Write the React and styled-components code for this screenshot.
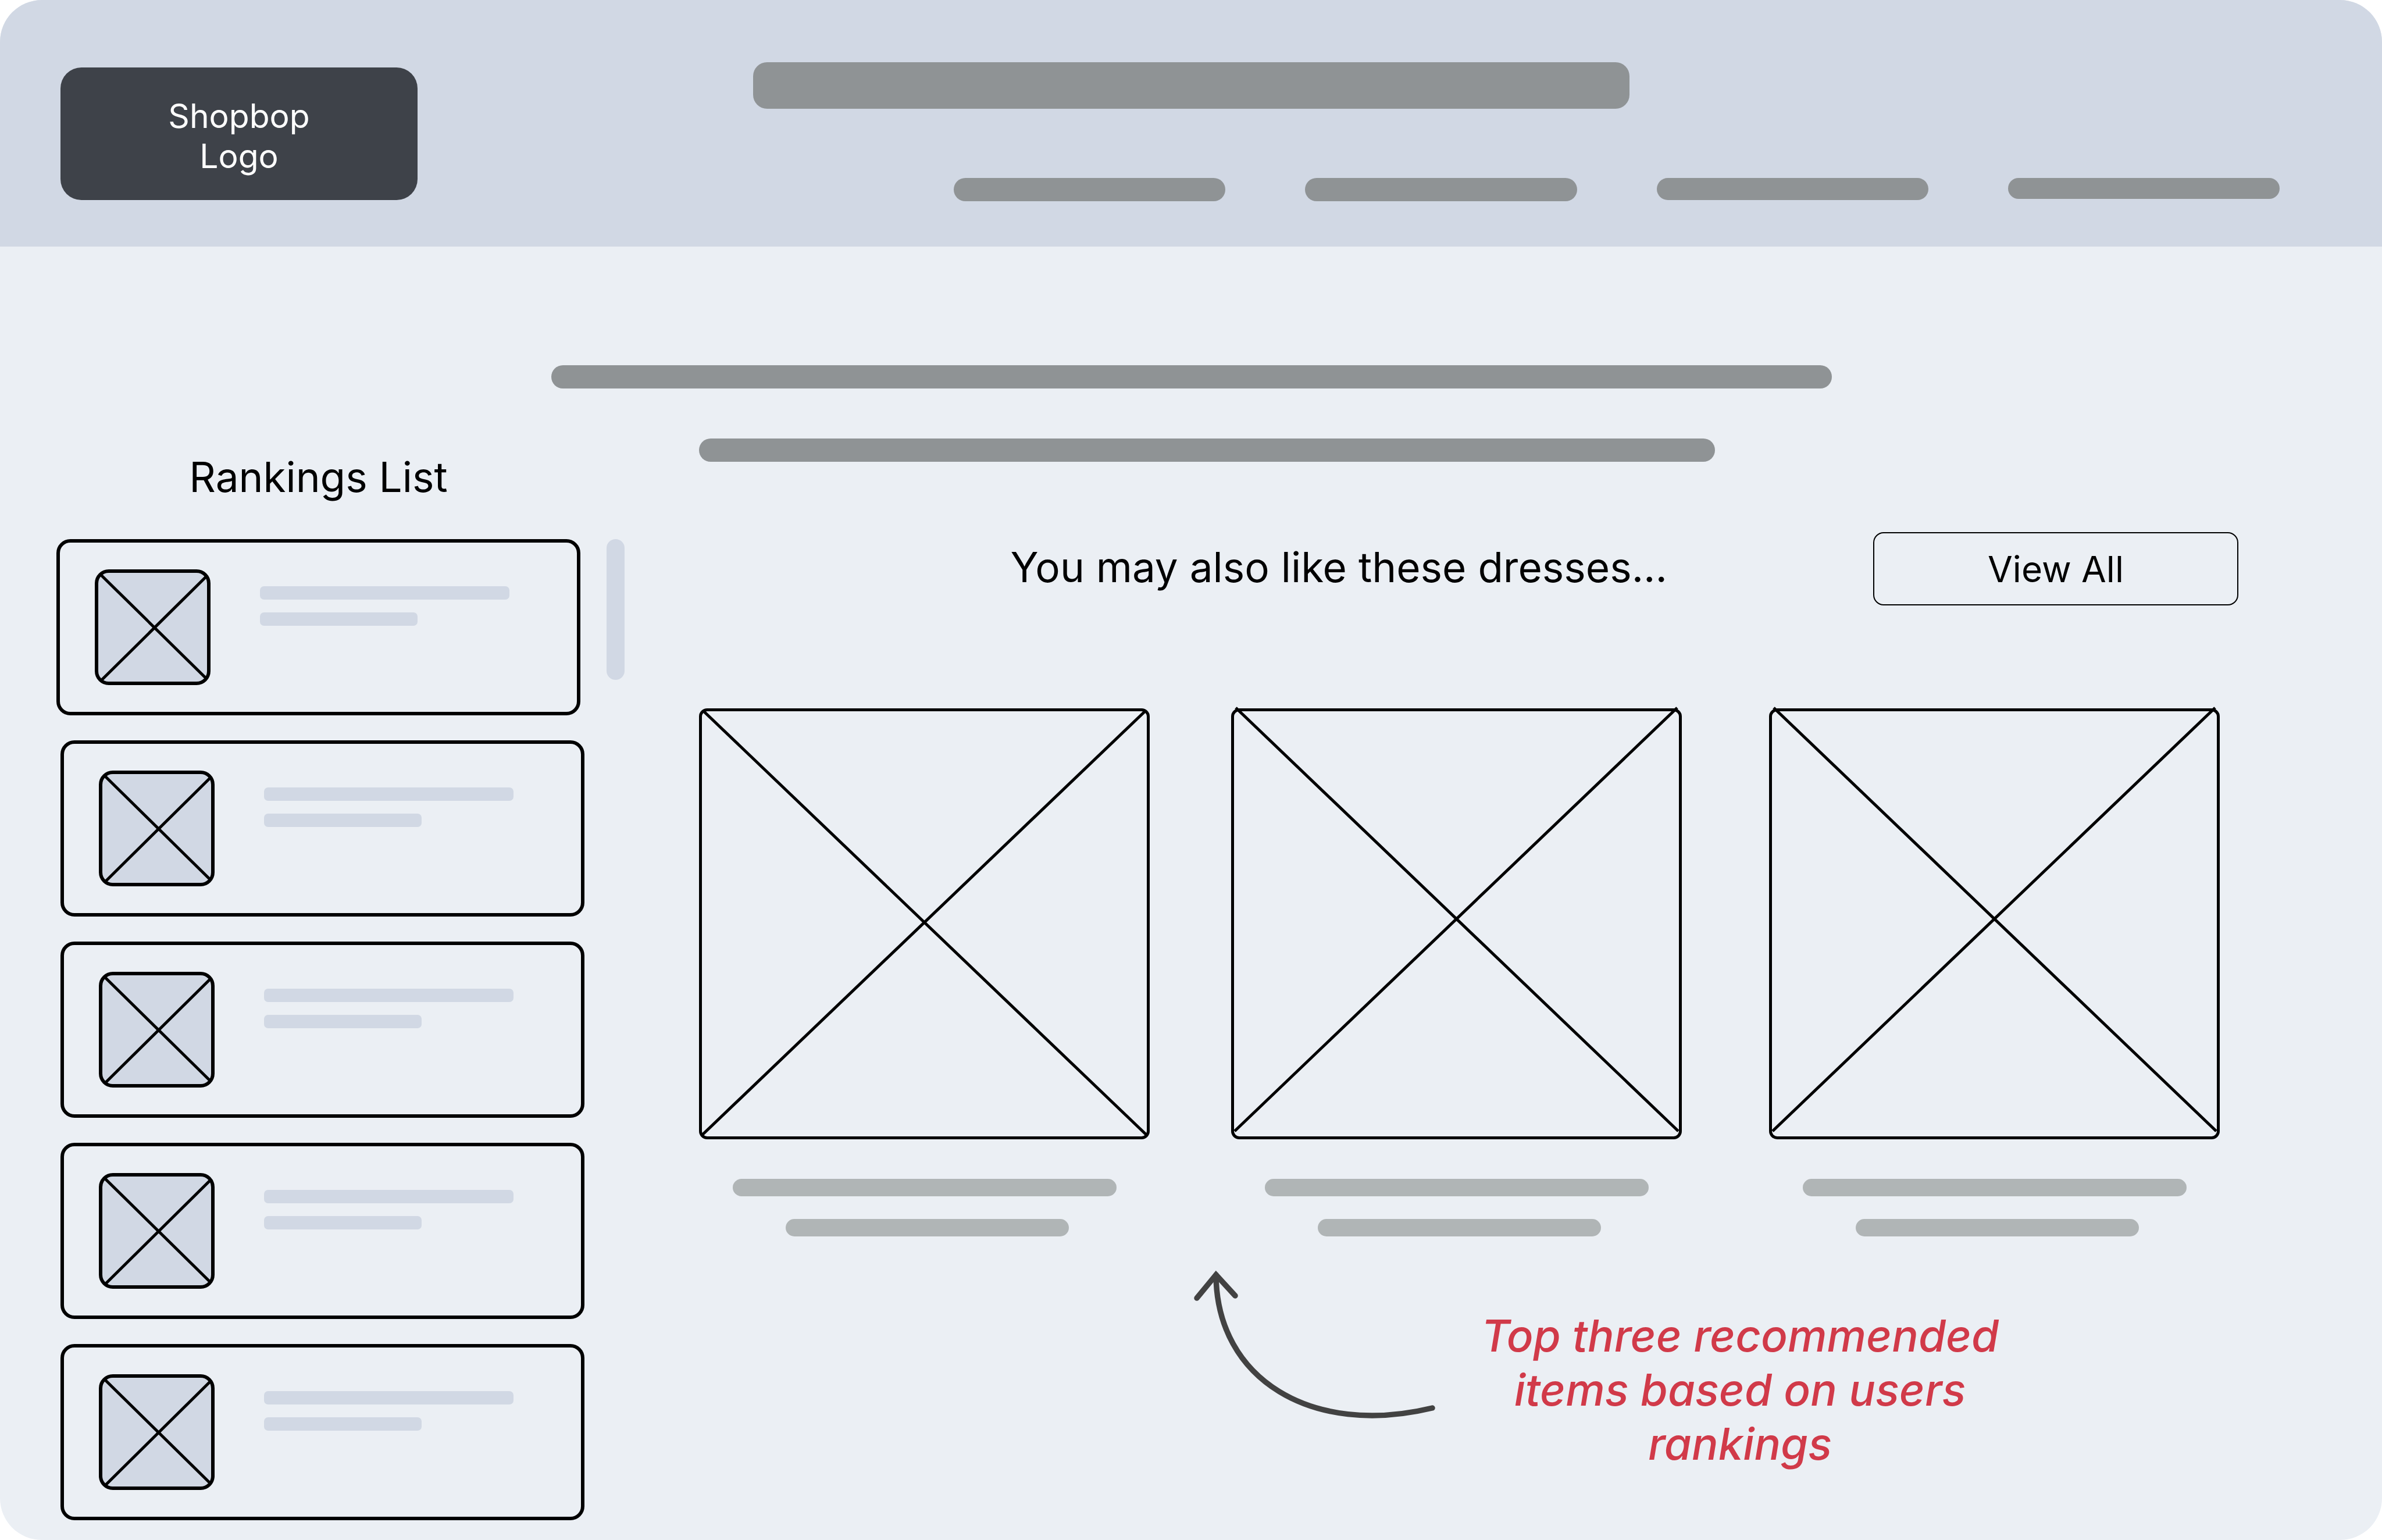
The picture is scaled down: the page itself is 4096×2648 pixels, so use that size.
import React from "react";
import styled, { createGlobalStyle } from "styled-components";

const color = {
  page: "#ebeff4",
  panel: "#d1d8e4",
  bar: "#8f9395",
  caption: "#b0b5b6",
  logo: "#3e4249",
  ink: "#000000",
  arrow: "#424242",
  note: "#d13a49",
};

const GlobalStyle = createGlobalStyle`
  *, *::before, *::after { box-sizing: border-box; }
  body {
    margin: 0;
    background: #ffffff;
    color: ${color.ink};
    font-family: Inter, "Liberation Sans", sans-serif;
  }
`;

const Page = styled.div`
  display: flex;
  flex-direction: column;
  min-height: 100vh;
  border-radius: 72px;
  overflow: hidden;
  background: ${color.page};
`;

const Header = styled.header`
  display: flex;
  align-items: flex-start;
  padding: 107px 176px 78px 104px;
  background: ${color.panel};
`;

const Logo = styled.a`
  flex: none;
  width: 614px;
  margin-top: 9px;
  padding: 49px 0 41px;
  border-radius: 36px;
  background: ${color.logo};
  color: #ffffff;
  font-size: 57px;
  line-height: 69px;
  text-align: center;
  text-decoration: none;
`;

const HeaderMain = styled.div`
  flex: 1;
  display: grid;
  grid-template-columns: 577fr 1507fr 1118fr;
  row-gap: 119px;
`;

const Search = styled.input`
  grid-column: 2;
  width: 100%;
  height: 80px;
  padding: 0 32px;
  border: 0;
  border-radius: 24px;
  background: ${color.bar};
  font: inherit;
  appearance: none;
`;

const Nav = styled.nav`
  grid-column: 1 / -1;
  justify-self: end;
  display: flex;
  align-items: flex-start;
  gap: 137px;
  width: 2280px;
  max-width: 100%;
`;

const NavLink = styled.a`
  flex: 1;
  height: ${(p) => p.$height}px;
  border-radius: 20px;
  background: ${color.bar};
`;

const Main = styled.main`
  flex: 1;
  padding: 204px 247px 34px 97px;
`;

const Bar = styled.div`
  width: ${(p) => p.$width}px;
  height: 40px;
  border-radius: 20px;
  background: ${color.bar};
`;

const Intro = styled.div`
  display: flex;
  justify-content: center;
  padding-left: 152px;
`;

const Columns = styled.div`
  display: flex;
  align-items: flex-start;
  gap: 128px;
`;

const Sidebar = styled.aside`
  flex: none;
  width: 977px;
  padding-top: 109px;
`;

const Heading = styled.h2`
  margin: 0;
  font-size: 71px;
  font-weight: 400;
  line-height: 86px;
  white-space: nowrap;
`;

const SidebarHeading = styled(Heading)`
  width: 901px;
  text-align: center;
`;

const ScrollArea = styled.div`
  display: flex;
  align-items: flex-start;
  justify-content: space-between;
  margin-top: 64px;
`;

const RankList = styled.ol`
  display: flex;
  flex-direction: column;
  gap: 43px;
  width: 908px;
  margin: 0;
  padding: 0;
  list-style: none;
`;

const RankCard = styled.li`
  display: flex;
  align-self: ${(p) => (p.$leading ? "flex-start" : "flex-end")};
  gap: 85px;
  width: 901px;
  padding: 46px 60px;
  border: 6px solid ${color.ink};
  border-radius: 24px;
`;

const Thumb = styled.div`
  width: 199px;
  height: 199px;
  border: 6px solid ${color.ink};
  border-radius: 24px;
  background: ${color.panel};
`;

const Cross = styled.svg`
  display: block;
  width: 100%;
  height: 100%;
  overflow: visible;
  fill: none;
  stroke: ${color.ink};
  stroke-width: 5;
`;

const RankText = styled.div`
  display: flex;
  flex-direction: column;
  gap: 22px;
  padding-top: 29px;
`;

const RankLine = styled.div`
  width: ${(p) => p.$width}px;
  height: 23px;
  border-radius: 7px;
  background: ${color.panel};
`;

const ScrollThumb = styled.div`
  width: 31px;
  height: 242px;
  border-radius: 16px;
  background: ${color.panel};
`;

const Content = styled.section`
  flex: 1;
  padding-top: 86px;
`;

const Toolbar = styled.div`
  display: flex;
  align-items: baseline;
  justify-content: flex-end;
  gap: 354px;
  margin-top: 121px;
`;

const ViewAll = styled.button`
  width: 628px;
  height: 126px;
  padding: 0;
  border: 2px solid ${color.ink};
  border-radius: 18px;
  background: transparent;
  color: inherit;
  font: inherit;
  font-size: 62px;
`;

const Products = styled.div`
  display: grid;
  grid-template-columns: 183fr 185fr 155fr;
  margin: 177px 32px 0 0;
`;

const Product = styled.article`
  width: 775px;
`;

const Picture = styled.div`
  height: 741px;
  border: 5px solid ${color.ink};
  border-radius: 14px;
`;

const Caption = styled.div`
  display: flex;
  flex-direction: column;
  gap: 39px;
  width: 660px;
  margin: 68px auto 0;
`;

const CaptionLine = styled.div`
  width: ${(p) => p.$width}px;
  height: 30px;
  margin-left: ${(p) => p.$indent || 0}px;
  border-radius: 15px;
  background: ${color.caption};
`;

const Annotation = styled.div`
  display: flex;
  align-items: flex-start;
  gap: 48px;
  margin-top: 54px;
  padding-left: 848px;
`;

const Arrow = styled.svg`
  flex: none;
  width: 424px;
  height: 262px;
  fill: none;
  stroke: ${color.arrow};
  stroke-width: 9.5;
  stroke-linecap: round;
  stroke-miterlimit: 8;
`;

const Note = styled.p`
  width: 940px;
  margin: 0;
  padding-top: 70px;
  color: ${color.note};
  font-family: Inter, "Liberation Sans", sans-serif;
  font-size: 76px;
  font-style: italic;
  font-weight: 500;
  line-height: 93px;
  text-align: center;
  white-space: nowrap;
`;

const navItems = [
  { label: "Designers", height: 40 },
  { label: "Clothing", height: 40 },
  { label: "Shoes", height: 38 },
  { label: "Sale", height: 36 },
];

const ranks = [1, 2, 3, 4, 5];

const products = [
  { id: "first", crossTop: 0 },
  { id: "second", crossTop: -6 },
  { id: "third", crossTop: -6 },
];

function RankItem({ leading }) {
  return (
    <RankCard $leading={leading}>
      <Thumb>
        <Cross viewBox="0 0 187 187" aria-hidden="true">
          <path d="M4 3L184 180M187 5L6 184" />
        </Cross>
      </Thumb>
      <RankText>
        <RankLine $width={429} />
        <RankLine $width={271} />
      </RankText>
    </RankCard>
  );
}

function ProductCard({ crossTop }) {
  return (
    <Product>
      <Picture>
        <Cross viewBox="0 0 765 731" aria-hidden="true">
          <g transform={`translate(0 ${crossTop})`}>
            <path d="M3 0L764 728M762 0L1 728" />
          </g>
        </Cross>
      </Picture>
      <Caption>
        <CaptionLine $width={660} />
        <CaptionLine $width={487} $indent={91} />
      </Caption>
    </Product>
  );
}

export default function App() {
  return (
    <>
      <GlobalStyle />
      <Page>
        <Header>
          <Logo href="#home">
            Shopbop
            <br />
            Logo
          </Logo>
          <HeaderMain>
            <Search type="search" aria-label="Search" />
            <Nav aria-label="Main">
              {navItems.map((item) => (
                <NavLink
                  key={item.label}
                  href={`#${item.label.toLowerCase()}`}
                  aria-label={item.label}
                  $height={item.height}
                />
              ))}
            </Nav>
          </HeaderMain>
        </Header>
        <Main>
          <Intro>
            <Bar $width={2202} />
          </Intro>
          <Columns>
            <Sidebar>
              <SidebarHeading>Rankings List</SidebarHeading>
              <ScrollArea>
                <RankList>
                  {ranks.map((rank) => (
                    <RankItem key={rank} leading={rank === 1} />
                  ))}
                </RankList>
                <ScrollThumb />
              </ScrollArea>
            </Sidebar>
            <Content>
              <Bar $width={1747} />
              <Toolbar>
                <Heading>You may also like these dresses...</Heading>
                <ViewAll type="button">View All</ViewAll>
              </Toolbar>
              <Products>
                {products.map((product) => (
                  <ProductCard key={product.id} crossTop={product.crossTop} />
                ))}
              </Products>
              <Annotation>
                <Arrow viewBox="2050 2180 424 262" aria-hidden="true">
                  <path d="M2091 2192C2092 2372 2256 2471 2463 2421" />
                  <path d="M2058 2232L2091 2192L2124 2228" />
                </Arrow>
                <Note>
                  Top three recommended
                  <br />
                  items based on users
                  <br />
                  rankings
                </Note>
              </Annotation>
            </Content>
          </Columns>
        </Main>
      </Page>
    </>
  );
}
